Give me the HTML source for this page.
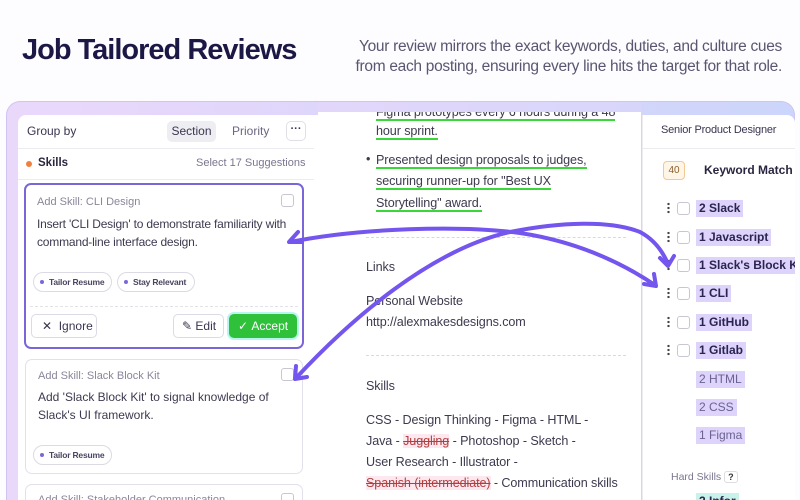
<!DOCTYPE html>
<html style="width:800px;height:500px;overflow:hidden"><head><meta charset="utf-8"><style>
*{box-sizing:border-box;margin:0;padding:0}
body{width:800px;height:500px;overflow:hidden;background:#fdfcff;font-family:"Liberation Sans",sans-serif;color:#3a3550;position:relative}
.abs{position:absolute}
h1{position:absolute;left:22px;top:34px;font-size:29px;font-weight:700;color:#1c1846;letter-spacing:-1px}
.sub{position:absolute;left:330px;top:37px;width:452px;text-align:right;font-size:15.5px;line-height:20px;color:#5a5670;letter-spacing:-0.3px}
.frame{left:6px;top:101px;width:789px;height:399px;border-radius:14px 14px 0 0;background:linear-gradient(90deg,#ead8fb,#dcd6fb 50%,#ccd5fb);border:1px solid #cfc4f2;border-bottom:none}
.panel{background:#fff}
.small{font-size:11px}
.card{position:absolute;background:#fff;border:1px solid #e2e0ea;border-radius:7px}
.cb{position:absolute;width:13px;height:13px;border:1.5px solid #c9c6d3;border-radius:3px;background:#fff}
.pill{position:absolute;height:20px;border:1px solid #dcdae4;border-radius:10px;font-size:8.5px;font-weight:700;color:#4a4560;line-height:18px;padding-left:15px;white-space:nowrap;letter-spacing:-0.2px}
.pill:before{content:"";position:absolute;left:6px;top:7px;width:4px;height:4px;border-radius:2px;background:#7a68d8}
.btn{position:absolute;height:24px;border:1px solid #dcdae4;border-radius:5px;font-size:12px;line-height:22px;color:#3a3550;background:#fff}
.mid{font-size:12.6px;color:#3d3a4e;position:absolute;left:366px;white-space:nowrap;letter-spacing:-0.1px}
.gl{border-bottom:2px solid #3bd63b}
.kw{position:absolute;left:696px;font-size:12px;font-weight:700;color:#2a2450;background:#ddd3fb;padding:0 3px;line-height:17px;white-space:nowrap}
.kw.l{font-weight:400;color:#6a6290}
.dots{position:absolute;left:667px;width:3px;height:12px;background:radial-gradient(circle,#444 1.1px,transparent 1.3px) 0 0/3px 4px}
.rcb{left:677px}
.dash{position:absolute;left:366px;width:260px;border-top:1px dashed #d9d8df}
</style></head><body>
<h1>Job Tailored Reviews</h1>
<div class="sub">Your review mirrors the exact keywords, duties, and culture cues from each posting, ensuring every line hits the target for that role.</div>
<div class="abs frame"></div>
<div class="abs panel" style="left:18px;top:115px;width:300px;height:385px;border-radius:8px 0 0 0"></div>
<div class="abs panel" style="left:318px;top:104px;width:323px;height:396px"></div>
<div class="abs panel" style="left:642px;top:115px;width:153px;height:385px;border-left:1px solid #ecebf0;border-radius:0 8px 0 0"></div>

<div class="abs" style="left:27px;top:124px;font-size:12px;color:#3a3550">Group by</div>
<div class="abs" style="left:167px;top:121px;width:49px;height:21px;background:#eeedf2;border-radius:5px;font-size:12px;line-height:21px;text-align:center">Section</div>
<div class="abs" style="left:232px;top:124px;font-size:12px;color:#6a6680">Priority</div>
<div class="abs" style="left:286px;top:121px;width:20px;height:20px;border:1px solid #e0dfe6;border-radius:5px;font-size:11px;text-align:center;line-height:14px;font-weight:700">···</div>
<div class="abs" style="left:18px;top:148px;width:296px;border-top:1px solid #ecebf0"></div>
<div class="abs" style="left:26px;top:161px;width:6px;height:6px;border-radius:3px;background:#f08040"></div>
<div class="abs" style="left:38px;top:157px;font-size:11.5px;font-weight:700;color:#2a2640">Skills</div>
<div class="abs" style="left:196px;top:157px;font-size:11px;color:#7a7690">Select 17 Suggestions</div>
<div class="abs" style="left:18px;top:179px;width:296px;border-top:1px solid #ecebf0"></div>

<div class="card" style="left:24px;top:183px;width:280px;height:166px;border:2px solid #7a66d6"></div>
<div class="abs small" style="left:37px;top:196px;color:#8a8699">Add Skill: CLI Design</div>
<div class="cb" style="left:281px;top:194px"></div>
<div class="abs" style="left:37px;top:215px;width:265px;font-size:12px;line-height:18px;color:#3d3a50;letter-spacing:-0.2px">Insert 'CLI Design' to demonstrate familiarity with command-line interface design.</div>
<div class="pill" style="left:33px;top:272px;width:79px">Tailor Resume</div>
<div class="pill" style="left:117px;top:272px;width:78px">Stay Relevant</div>
<div class="abs" style="left:30px;top:306px;width:268px;border-top:1px dashed #e3e2e8"></div>
<div class="btn" style="left:31px;top:314px;width:66px;padding-left:10px">✕&nbsp; Ignore</div>
<div class="btn" style="left:173px;top:314px;width:51px;padding-left:8px">✎ Edit</div>
<div class="btn" style="left:229px;top:314px;width:68px;background:#2fc13a;border-color:#2fc13a;color:#fff;padding-left:8px;box-shadow:0 0 0 2px #b8f5ee">✓&nbsp;Accept</div>

<div class="card" style="left:25px;top:359px;width:278px;height:115px"></div>
<div class="abs small" style="left:38px;top:370px;color:#8a8699">Add Skill: Slack Block Kit</div>
<div class="cb" style="left:281px;top:368px"></div>
<div class="abs" style="left:38px;top:388px;width:262px;font-size:12px;line-height:18px;color:#3d3a50">Add 'Slack Block Kit' to signal knowledge of Slack's UI framework.</div>
<div class="pill" style="left:33px;top:445px;width:79px">Tailor Resume</div>
<div class="card" style="left:25px;top:484px;width:278px;height:40px"></div>
<div class="abs small" style="left:38px;top:494px;color:#8a8699">Add Skill: Stakeholder Communication</div>
<div class="cb" style="left:281px;top:493px"></div>

<div class="mid" style="left:376px;top:105px"><span class="gl">Figma prototypes every 6 hours during a 48</span></div>
<div class="mid" style="left:376px;top:124px"><span class="gl">hour sprint.</span></div>
<div class="mid" style="left:366px;top:152px">•</div>
<div class="mid" style="left:376px;top:153px"><span class="gl">Presented design proposals to judges,</span></div>
<div class="mid" style="left:376px;top:174px"><span class="gl">securing runner-up for "Best UX</span></div>
<div class="mid" style="left:376px;top:196px"><span class="gl">Storytelling" award.</span></div>
<div class="abs" style="left:318px;top:101px;width:323px;height:11px;background:linear-gradient(90deg,#e2d7fb,#d8d5fb);border-top:1px solid #cfc4f2"></div>
<div class="dash" style="top:237px"></div>
<div class="mid" style="top:260px">Links</div>
<div class="mid" style="top:294px">Personal Website</div>
<div class="mid" style="top:315px">http://alexmakesdesigns.com</div>
<div class="dash" style="top:355px"></div>
<div class="mid" style="top:379px">Skills</div>
<div class="mid" style="top:413px">CSS - Design Thinking - Figma - HTML -</div>
<div class="mid" style="top:434px">Java - <s style="color:#b04040;background:#fde8f0">Juggling</s> - Photoshop - Sketch -</div>
<div class="mid" style="top:455px">User Research - Illustrator -</div>
<div class="mid" style="top:476px;letter-spacing:-0.1px"><s style="color:#b04040;background:#fde8f0">Spanish (intermediate)</s> - Communication skills</div>

<div class="abs" style="left:661px;top:124px;font-size:11px;color:#3a3550;letter-spacing:-0.2px">Senior Product Designer</div>
<div class="abs" style="left:642px;top:148px;width:153px;border-top:1px solid #ecebf0"></div>
<div class="abs" style="left:663px;top:161px;width:22px;height:19px;border:1px solid #f4c890;background:#fff6e8;border-radius:4px;font-size:10px;text-align:center;line-height:17px;color:#8a6030">40</div>
<div class="abs" style="left:704px;top:163px;font-size:12px;font-weight:700;color:#2a2640">Keyword Match</div>

<div class="dots" style="top:202px"></div><div class="cb rcb" style="top:202px"></div><div class="kw" style="top:200px">2 Slack</div>
<div class="dots" style="top:231px"></div><div class="cb rcb" style="top:231px"></div><div class="kw" style="top:229px">1 Javascript</div>
<div class="dots" style="top:259px"></div><div class="cb rcb" style="top:259px"></div><div class="kw" style="top:257px">1 Slack's Block Kit</div>
<div class="dots" style="top:287px"></div><div class="cb rcb" style="top:287px"></div><div class="kw" style="top:285px">1 CLI</div>
<div class="dots" style="top:316px"></div><div class="cb rcb" style="top:316px"></div><div class="kw" style="top:314px">1 GitHub</div>
<div class="dots" style="top:344px"></div><div class="cb rcb" style="top:344px"></div><div class="kw" style="top:342px">1 Gitlab</div>
<div class="kw l" style="top:371px">2 HTML</div>
<div class="kw l" style="top:399px">2 CSS</div>
<div class="kw l" style="top:427px">1 Figma</div>
<div class="abs" style="left:671px;top:471px;font-size:10.5px;color:#7a7690">Hard Skills <span style="border:1px solid #ddd;border-radius:3px;padding:0 3px;font-size:9px;color:#333;font-weight:700">?</span></div>
<div class="kw" style="top:493px;background:#c8f3ea">2 Infor</div>
<div class="abs" style="left:795px;top:101px;width:5px;height:399px;background:#fdfcff"></div>

<svg class="abs" style="left:0;top:0" width="800" height="500" viewBox="0 0 800 500">
<g fill="none" stroke="#7455ee" stroke-width="4" stroke-linecap="round" stroke-linejoin="round">
<path d="M290 242 C360 228 460 225 520 233 C580 242 625 265 655 285"/>
<path d="M302 242 L289 242 L298 232"/>
<path d="M644 284 L656 286 L654 274"/>
<path d="M296 378 C350 320 430 250 510 232 C560 222 610 220 640 232 C655 240 663 252 668 264"/>
<path d="M296 366 L295 379 L307 377"/>
<path d="M660 258 L668 266 L674 256"/>
</g></svg>
</body></html>
